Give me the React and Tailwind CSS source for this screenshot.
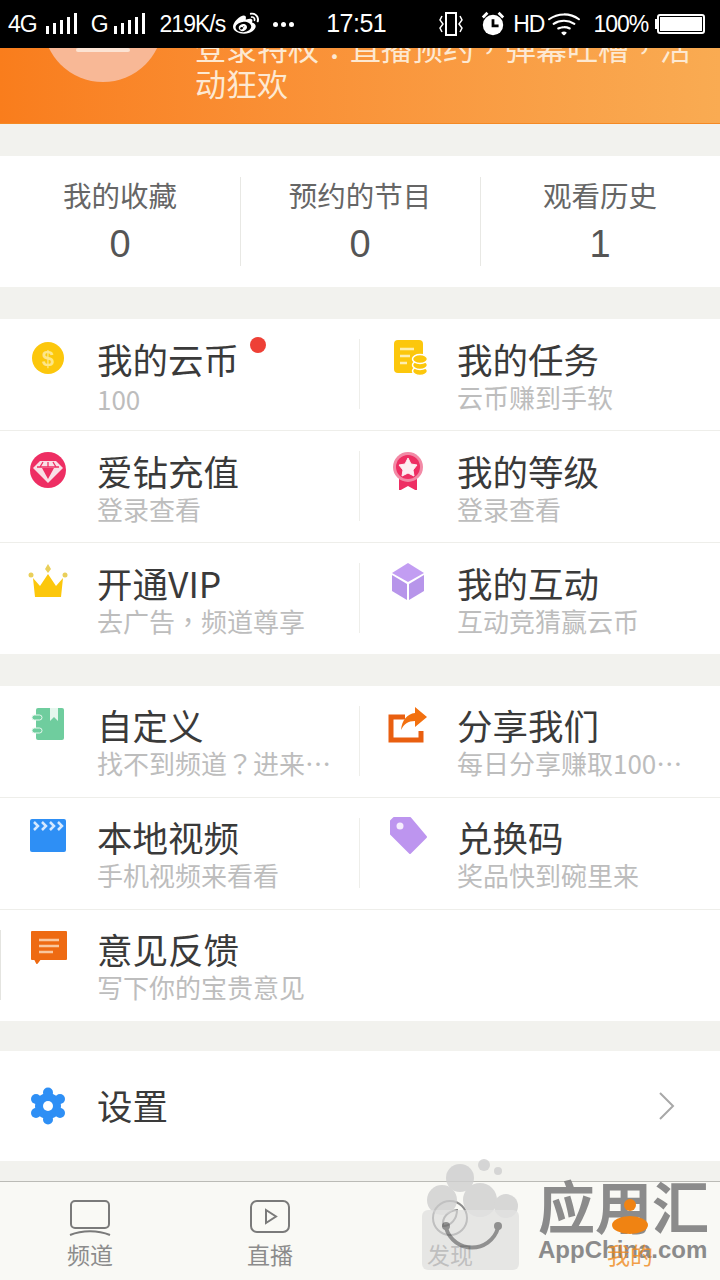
import React from 'react'
import { FaWeibo } from 'react-icons/fa'
import { BsWifi } from 'react-icons/bs'

const SignalBars = () => (
    <svg width="36" height="24" viewBox="0 0 36 24" fill="#fff">
        <rect x="1" y="14" width="3" height="8" />
        <rect x="8" y="11" width="3" height="11" />
        <rect x="15" y="8" width="3" height="14" />
        <rect x="22" y="5" width="3" height="17" />
        <rect x="29" y="1" width="3" height="21" />
    </svg>
)

const StatusBar = () => (
    <div className="h-12 bg-black text-white flex items-center pl-[8px] font-['Liberation_Sans',sans-serif] text-[23px] tracking-[-1px] relative z-10">
        <span>4G</span>
        <span className="ml-[8px]"><SignalBars /></span>
        <span className="ml-[10px]">G</span>
        <span className="ml-[5px]"><SignalBars /></span>
        <span className="ml-[11px]">219K/s</span>
        <FaWeibo className="ml-[7px] w-[28px] h-[26px]" />
        <span className="ml-[13px] flex gap-[3px]">
            <i className="w-[5px] h-[5px] rounded-full bg-white" />
            <i className="w-[5px] h-[5px] rounded-full bg-white" />
            <i className="w-[5px] h-[5px] rounded-full bg-white" />
        </span>
        <span className="ml-[32px] text-[25px] tracking-[-0.5px]">17:51</span>
        <svg className="ml-[53px]" width="24" height="28" viewBox="0 0 24 28" fill="none" stroke="#fff" strokeWidth="2">
            <rect x="7" y="3" width="10" height="22" />
            <path d="M3 6 L1 10 L4 14 L1 18 L3 22 M21 6 L23 10 L20 14 L23 18 L21 22" strokeWidth="1.5" />
        </svg>
        <svg className="ml-[17px]" width="26" height="28" viewBox="0 0 28 28">
            <circle cx="14" cy="15" r="11" fill="#fff" />
            <path d="M14 9 V16 H20" fill="none" stroke="#000" strokeWidth="3" />
            <path d="M3 7 L8 2 M25 7 L20 2" stroke="#fff" strokeWidth="3" />
        </svg>
        <span className="ml-[7px]">HD</span>
        <BsWifi className="ml-[3px] w-[34px] h-[34px]" />
        <span className="ml-[12px]">100%</span>
        <span className="ml-[7px] w-[2px] h-[10px] bg-white" />
        <span className="w-[48px] h-[20px] border-2 border-white rounded-[3px] p-[1px] flex">
            <span className="flex-1 bg-white" />
        </span>
    </div>
)

const CoinIcon = () => (
    <svg width="40" height="40" viewBox="0 0 40 40">
        <circle cx="20" cy="20" r="16" fill="#fcc70c" />
        <text x="20" y="28" textAnchor="middle" fontSize="22" fontWeight="700" fill="#fde68a" fontFamily="Liberation Sans">$</text>
    </svg>
)

const TaskIcon = () => (
    <svg width="40" height="40" viewBox="0 0 40 40">
        <rect x="6" y="2" width="29" height="33" rx="4" fill="#fcc70c" />
        <path d="M12 11 H26 M12 18 H22 M12 25 H19" stroke="#fdeeb0" strokeWidth="2.5" />
        <g fill="#fcc70c" stroke="#fff" strokeWidth="1.5">
            <ellipse cx="32" cy="33" rx="7.5" ry="4.5" />
            <ellipse cx="32" cy="27" rx="7.5" ry="4.5" />
            <ellipse cx="32" cy="21" rx="7.5" ry="4.5" />
        </g>
    </svg>
)

const DiamondIcon = () => (
    <svg width="40" height="40" viewBox="0 0 40 40">
        <circle cx="20" cy="20" r="18" fill="#ee2e63" />
        <path d="M12 11 H28 L35 18 L20 33 L5 18 Z" fill="#f9dfe6" />
        <path d="M14 18 H26 L20 29 Z" fill="#ee2e63" />
        <path d="M9 17 H31 M15 12 L12 17 M20 12 L20 17 M25 12 L28 17" stroke="#ee2e63" strokeWidth="1.3" />
    </svg>
)

const MedalIcon = () => (
    <svg width="40" height="40" viewBox="0 0 40 40">
        <path d="M11 26 H29 V41 L20 36 L11 41 Z" fill="#ee2e63" />
        <circle cx="20" cy="17" r="15" fill="#f28aa6" />
        <circle cx="20" cy="17" r="12" fill="#ee2e63" />
        <path d="M20 8 L23 14 L29 15 L25 20 L26 26 L20 23 L14 26 L15 20 L11 15 L17 14 Z" fill="#fdeef2" strokeLinejoin="round" stroke="#fdeef2" />
    </svg>
)

const CrownIcon = () => (
    <svg width="40" height="40" viewBox="0 0 40 40">
        <path d="M5 16 L12 24 L20 12 L28 24 L35 16 L33 35 H7 Z" fill="#fcc70c" />
        <path d="M20 2 L23 7 L20 11 L17 7 Z" fill="#e9cf5a" />
        <circle cx="3" cy="13" r="2.5" fill="#e9cf5a" />
        <circle cx="37" cy="13" r="2.5" fill="#e9cf5a" />
    </svg>
)

const CubeIcon = () => (
    <svg width="40" height="40" viewBox="0 0 40 40">
        <path d="M20 1 L36 11 L20 20 L4 11 Z" fill="#c29df2" />
        <path d="M4 13 L19 22 V38 L4 29 Z" fill="#b795ea" />
        <path d="M36 13 L21 22 V38 L36 29 Z" fill="#b795ea" />
    </svg>
)

const NotebookIcon = () => (
    <svg width="40" height="40" viewBox="0 0 40 40">
        <rect x="8" y="3" width="28" height="32" rx="2" fill="#6fcd9e" />
        <path d="M22 3 H30 V16 L26 12 L22 16 Z" fill="#e6f7ee" />
        <rect x="4" y="10" width="10" height="5" rx="2.5" fill="#6fcd9e" stroke="#e6f7ee" />
        <rect x="4" y="23" width="10" height="5" rx="2.5" fill="#6fcd9e" stroke="#e6f7ee" />
    </svg>
)

const ShareIcon = () => (
    <svg width="40" height="40" viewBox="0 0 40 40">
        <path d="M17 12 H3 V35 H33 V26" fill="none" stroke="#e95f10" strokeWidth="5" />
        <path d="M27 2 L39 12 L27 22 V16 C20 16 16 19 13 25 C14 15 19 9 27 8 Z" fill="#f2700f" />
    </svg>
)

const ClapperIcon = () => (
    <svg width="40" height="40" viewBox="0 0 40 40">
        <rect x="2" y="2" width="36" height="33" rx="2" fill="#2e8ff5" />
        <path d="M6 5 L10 9 L6 13 M14 5 L18 9 L14 13 M22 5 L26 9 L22 13 M30 5 L34 9 L30 13" fill="none" stroke="#d6e9ff" strokeWidth="2.5" />
    </svg>
)

const TagIcon = () => (
    <svg width="40" height="40" viewBox="0 0 40 40">
        <path d="M6 1 H22 L38 20 L22 36 L3 17 V4 Z" fill="#bd95ef" strokeLinejoin="round" stroke="#bd95ef" strokeWidth="2" />
        <circle cx="12" cy="9" r="3.5" fill="#f5edfd" />
    </svg>
)

const FeedbackIcon = () => (
    <svg width="40" height="40" viewBox="0 0 40 40">
        <path d="M4 3 H38 V30 H12 L9 34 L7 30 H4 Z" fill="#ee6a12" strokeLinejoin="round" stroke="#ee6a12" strokeWidth="2" />
        <path d="M11 11 H31 M11 17 H31 M11 23 H25" stroke="#f9c79e" strokeWidth="2.5" />
    </svg>
)

const GearIcon = () => (
    <svg width="40" height="40" viewBox="0 0 40 40" fill="#2e8ff5">
        <circle cx="20" cy="20" r="13" />
        <circle cx="20" cy="6.5" r="5" />
        <circle cx="20" cy="33.5" r="5" />
        <circle cx="8" cy="13" r="5" />
        <circle cx="32" cy="13" r="5" />
        <circle cx="8" cy="27" r="5" />
        <circle cx="32" cy="27" r="5" />
        <circle cx="20" cy="20" r="5" fill="#fff" />
    </svg>
)

// punctuation sits centred in the cell in the reference, the TC face does that
const Punct = ({ children }) => (
    <span className="font-['Noto_Sans_CJK_TC',sans-serif]">{children}</span>
)

const Cell = ({ icon, title, sub, dot, subClass = 'mt-px', dividerClass = '', compact }) => (
    <div className={`w-[360px] flex items-start min-w-0 relative ${dividerClass}`}>
        <div className="w-10 h-10 ml-7 mr-[29px] mt-[19px] shrink-0">{icon}</div>
        <div className={`w-[236px] ${compact ? 'pt-[17px]' : 'pt-[18px]'}`}>
            <div className="flex h-11 items-center text-[35.5px] leading-[44px] text-[#3a3a3a]">
                {title}
                {dot && <span className="w-4 h-4 rounded-full bg-[#ee4036] ml-[11px] mb-[28px]" />}
            </div>
            <div className={`h-[30px] text-[26px] leading-[30px] text-[#bdbdbd] truncate ${subClass}`}>{sub}</div>
        </div>
    </div>
)

const rightDivider = "before:content-[''] before:absolute before:left-[-1px] before:top-[20px] before:h-[70px] before:w-px before:bg-[#eeeeea]"
const edgeDivider = "before:content-[''] before:absolute before:left-0 before:top-[20px] before:h-[70px] before:w-px before:bg-[#e4e4e0]"

const Row = ({ left, right, last, compact }) => (
    <div className={`flex ${last ? 'h-[111px]' : 'h-[112px] border-b border-[#eeeeea]'}`}>
        <Cell {...left} compact={compact} />
        {right && <Cell {...right} compact={compact} dividerClass={rightDivider} />}
    </div>
)

const Stat = ({ label, value, divider }) => (
    <div className={`flex-1 flex flex-col items-center relative ${divider ? "before:content-[''] before:absolute before:left-0 before:top-[21px] before:h-[89px] before:w-px before:bg-[#e8e8e4]" : ''}`}>
        <div className="mt-[18px] text-[28.5px] leading-[42px] text-[#666]">{label}</div>
        <div className="mt-[4px] text-[38px] leading-[48px] text-[#555] font-['Liberation_Sans',sans-serif]">{value}</div>
    </div>
)

const Tab = ({ icon, label, active }) => (
    <div className={`flex-1 flex flex-col items-center pt-[17px] ${active ? 'relative z-10' : ''}`}>
        <div className="h-[40px]">{icon}</div>
        <div className={`-mt-[2px] text-[23px] leading-[34px] ${active ? 'text-[#f08a1c] opacity-80' : 'text-[#8c8c8c]'}`}>{label}</div>
    </div>
)

const Watermark = () => (
    <div className="absolute right-[6px] bottom-[8px] flex items-start pointer-events-none">
        <svg width="104" height="114" viewBox="0 0 104 114" className="opacity-80">
            <g fill="#cfcfcf">
                <circle cx="42" cy="20" r="14" />
                <circle cx="66" cy="7" r="6" />
                <circle cx="80" cy="13" r="4" />
                <circle cx="24" cy="42" r="15" />
                <circle cx="62" cy="42" r="17" />
                <circle cx="88" cy="48" r="12" />
            </g>
            <rect x="4" y="52" width="97" height="60" rx="6" fill="#dcdcdc" opacity="0.8" />
            <path d="M28 70 C36 96 72 96 80 70" fill="none" stroke="#777" strokeWidth="4" />
            <circle cx="28" cy="68" r="4" fill="#777" />
            <circle cx="80" cy="68" r="4" fill="#777" />
        </svg>
        <div className="ml-[16px] mt-[16px] w-[176px] text-[#808080] font-bold opacity-90">
            <div className="text-[57px] leading-[60px] whitespace-nowrap">应用汇</div>
            <div className="mt-[1px] text-[24px] leading-[30px] font-['Liberation_Sans',sans-serif] whitespace-nowrap">AppChina.com</div>
        </div>
    </div>
)

const App = () => {
    return (
        <div className="w-[720px] h-[1280px] overflow-hidden relative bg-[#f2f2ee] font-['Noto_Sans_CJK_SC','Noto_Sans',sans-serif]">
            <StatusBar />

            <div className="h-[76px] overflow-hidden flex items-end bg-gradient-to-r from-[#f97d1c] to-[#f9ab52] border-b border-[#f58a24]">
                <div className="w-[120px] h-[120px] ml-[43px] mb-[41px] rounded-full bg-[#f8b896] shrink-0 flex items-end justify-center pb-[30px]">
                    <div className="w-[54px] h-[4px] rounded-full bg-[#fce3d3]" />
                </div>
                <div className="ml-[32px] w-[500px] mb-[22px] text-[31px] leading-[36px] text-[#fde9d2]">
                    登录特权<Punct>：</Punct>直播预约<Punct>，</Punct>弹幕吐槽<Punct>，</Punct>活动狂欢
                </div>
            </div>

            <div className="mt-8 h-[131px] bg-white flex">
                <Stat label="我的收藏" value="0" />
                <Stat label="预约的节目" value="0" divider />
                <Stat label="观看历史" value="1" divider />
            </div>

            <div className="mt-8 bg-white">
                <Row
                    left={{ icon: <CoinIcon />, title: '我的云币', sub: '100', dot: true, subClass: 'mt-[3px]' }}
                    right={{ icon: <TaskIcon />, title: '我的任务', sub: '云币赚到手软' }}
                />
                <Row
                    left={{ icon: <DiamondIcon />, title: '爱钻充值', sub: '登录查看' }}
                    right={{ icon: <MedalIcon />, title: '我的等级', sub: '登录查看' }}
                />
                <Row
                    last
                    left={{ icon: <CrownIcon />, title: '开通VIP', sub: <>去广告<Punct>，</Punct>频道尊享</> }}
                    right={{ icon: <CubeIcon />, title: '我的互动', sub: '互动竞猜赢云币' }}
                />
            </div>

            <div className="mt-8 bg-white">
                <Row
                    compact
                    left={{ icon: <NotebookIcon />, title: '自定义', sub: <>找不到频道<Punct>？</Punct>进来看看</> }}
                    right={{ icon: <ShareIcon />, title: '分享我们', sub: '每日分享赚取100云币' }}
                />
                <Row
                    compact
                    left={{ icon: <ClapperIcon />, title: '本地视频', sub: '手机视频来看看' }}
                    right={{ icon: <TagIcon />, title: '兑换码', sub: '奖品快到碗里来' }}
                />
                <Row
                    compact
                    last
                    left={{ icon: <FeedbackIcon />, title: '意见反馈', sub: '写下你的宝贵意见', dividerClass: edgeDivider }}
                />
            </div>

            <div className="mt-[30px] h-[110px] bg-white flex items-center">
                <div className="w-10 h-10 ml-7 mr-[29px] shrink-0"><GearIcon /></div>
                <div className="text-[35.5px] text-[#3a3a3a] leading-[44px] -mt-[2px]">设置</div>
                <svg className="ml-auto mr-[44px]" width="18" height="30" viewBox="0 0 18 30" fill="none" stroke="#a8a8a8" strokeWidth="2">
                    <path d="M2 2 L15 15 L2 28" />
                </svg>
            </div>

            <div className="mt-5 h-[99px] bg-[#f9f9f5] border-t border-[#bbbbb6] flex">
                <Tab
                    label="频道"
                    icon={
                        <svg width="44" height="38" viewBox="0 0 44 38" fill="none" stroke="#7a7a7a" strokeWidth="2">
                            <rect x="3" y="2" width="38" height="27" rx="4" />
                            <path d="M2 36 C14 31 30 31 42 36" />
                        </svg>
                    }
                />
                <Tab
                    label="直播"
                    icon={
                        <svg width="44" height="38" viewBox="0 0 44 38" fill="none" stroke="#7a7a7a" strokeWidth="2">
                            <rect x="3" y="2" width="38" height="31" rx="6" />
                            <path d="M18 11 L28 17.5 L18 24 Z" />
                        </svg>
                    }
                />
                <Tab
                    label="发现"
                    icon={
                        <svg width="44" height="38" viewBox="0 0 44 38" fill="none" stroke="#8c8c8c" strokeWidth="2">
                            <circle cx="22" cy="19" r="17" />
                            <path d="M29 11 C20 12 14 18 15 27 C23 27 29 20 29 11 Z" />
                        </svg>
                    }
                />
                <Tab
                    active
                    label="我的"
                    icon={
                        <svg width="44" height="38" viewBox="0 0 44 38" fill="#f08312">
                            <circle cx="22" cy="6" r="6" />
                            <ellipse cx="22" cy="26" rx="18" ry="9" />
                        </svg>
                    }
                />
            </div>

            <Watermark />
        </div>
    )
}

export default App
